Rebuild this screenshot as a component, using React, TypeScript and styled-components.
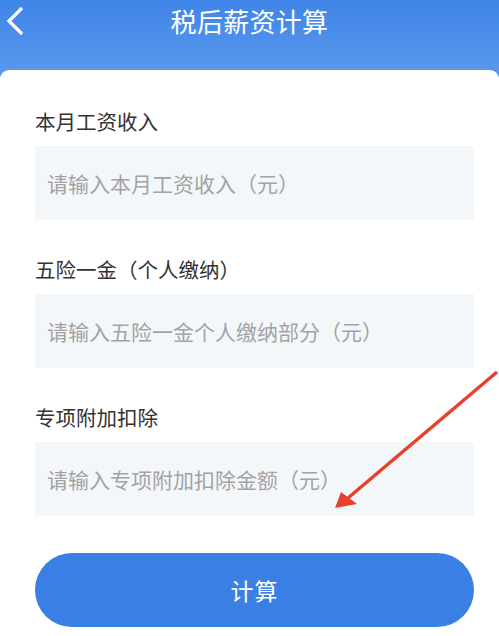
import React from "react";
import styled, { createGlobalStyle } from "styled-components";

const GlobalStyle = createGlobalStyle`
  html, body {
    margin: 0;
    padding: 0;
    background: #ffffff;
    font-family: "Noto Sans CJK SC", "Noto Sans", sans-serif;
  }
  * { box-sizing: border-box; }
`;

const Page = styled.div`
  position: relative;
  width: 499px;
  height: 636px;
  overflow: hidden;
  background: #ffffff;
`;

const Header = styled.div`
  height: 78px;
  background: linear-gradient(180deg, #3f85e8 0%, #5b99ec 100%);
`;

const NavBar = styled.div`
  position: relative;
  height: 42px;
  display: flex;
  align-items: center;
  justify-content: center;
`;

const BackButton = styled.div`
  position: absolute;
  left: 2px;
  top: 4px;
  width: 26px;
  height: 34px;
  display: flex;
  align-items: center;
  justify-content: center;
`;

const Title = styled.h1`
  margin: 0;
  font-size: 26px;
  font-weight: 400;
  color: #ffffff;
  line-height: 42px;
  letter-spacing: 0.3px;
`;

const Card = styled.div`
  margin-top: -8px;
  background: #ffffff;
  border-radius: 9px 9px 0 0;
  padding: 37px 25px 0 35px;
  min-height: 566px;
`;

const Field = styled.div`
  display: flex;
  flex-direction: column;
  margin-bottom: 35px;
`;

const Label = styled.label`
  font-size: 20.5px;
  line-height: 28px;
  color: #333333;
  margin-bottom: 11px;
`;

const Input = styled.input`
  height: 74px;
  border: none;
  outline: none;
  background: #f4f7fa;
  padding: 0 12px;
  font-family: inherit;
  font-size: 21px;
  color: #333333;
  &::placeholder {
    color: #a3a3a3;
  }
`;

const CalcButton = styled.button`
  width: 439px;
  height: 74px;
  margin-top: 2px;
  border: none;
  border-radius: 37px;
  background: #3a7fe4;
  color: #ffffff;
  font-family: inherit;
  font-size: 23px;
  letter-spacing: 1px;
`;

const Annotation = styled.svg`
  position: absolute;
  left: 0;
  top: 0;
  pointer-events: none;
`;

const fields = [
  { label: "本月工资收入", placeholder: "请输入本月工资收入（元）" },
  { label: "五险一金（个人缴纳）", placeholder: "请输入五险一金个人缴纳部分（元）" },
  { label: "专项附加扣除", placeholder: "请输入专项附加扣除金额（元）" },
];

export default function App() {
  return (
    <Page>
      <GlobalStyle />
      <Header>
        <NavBar>
          <BackButton>
            <svg width="20" height="30" viewBox="0 0 20 30">
              <polyline
                points="17,2 4,15 17,28"
                fill="none"
                stroke="#ffffff"
                strokeWidth="3.2"
              />
            </svg>
          </BackButton>
          <Title>税后薪资计算</Title>
        </NavBar>
      </Header>
      <Card>
        {fields.map((f) => (
          <Field key={f.label}>
            <Label>{f.label}</Label>
            <Input placeholder={f.placeholder} />
          </Field>
        ))}
        <CalcButton>计算</CalcButton>
      </Card>
      <Annotation width="499" height="636" viewBox="0 0 499 636">
        <line x1="497" y1="372" x2="348" y2="498" stroke="#e8412b" strokeWidth="3.5" />
        <polygon points="335,508 341,492 357,504" fill="#e8412b" />
      </Annotation>
    </Page>
  );
}
